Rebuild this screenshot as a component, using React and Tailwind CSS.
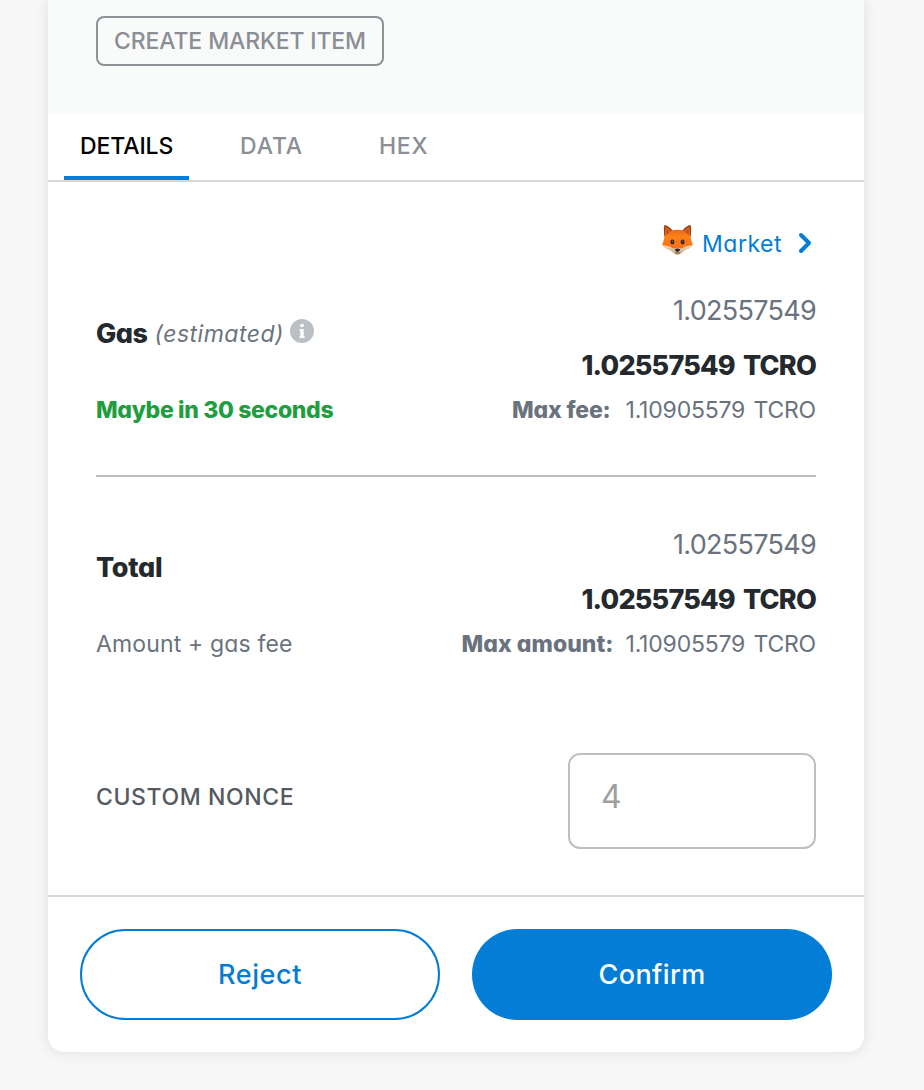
function Fox() {
  return (
    <svg width="31" height="30" viewBox="0.4 0 29.200 30" preserveAspectRatio="none" aria-hidden="true">
      <defs>
        <linearGradient id="fur" x1="0" y1="0" x2="0" y2="1">
          <stop offset="0" stopColor="#d9581a" />
          <stop offset="0.4" stopColor="#fd8317" />
          <stop offset="1" stopColor="#ee5f18" />
        </linearGradient>
        <linearGradient id="muzzle" x1="0" y1="0" x2="0" y2="1">
          <stop offset="0" stopColor="#f8dcb4" />
          <stop offset="1" stopColor="#b9a692" />
        </linearGradient>
      </defs>
      <path d="M2.800.3C5.200.4 8.400 3 10.100 5.300c3-.8 6.800-.8 9.800 0C21.600 3 24.800.4 27.200.3c.8 4 .6 8.500.2 12.200.5 2.400 1.200 4.900 2 7.200-1.200 1.500-2.600 2.900-4.300 4-2.400.5-3.400 1.400-4.900 2.800-1.500 1.400-3.200 2.900-5.200 2.900s-3.700-1.500-5.200-2.900c-1.500-1.400-2.500-2.300-4.900-2.800-1.700-1.100-3.100-2.500-4.300-4 .8-2.300 1.500-4.800 2-7.200C2.200 8.800 2 4.300 2.800.3Z" fill="url(#fur)" />
      <path d="M2.800.3C5.100.5 8.200 3 9.900 5.400L8.900 6C7.400 3.900 5.300 2.200 3.700 1.600c-.5 2.700-.5 5.900-.3 8.500l-.5 1.500C2.200 8 2 4 2.800.3ZM27.200.3C24.900.5 21.800 3 20.100 5.400l1 .6c1.500-2.100 3.600-3.800 5.200-4.400.5 2.700.5 5.900.3 8.500l.5 1.500c.7-3.600.9-7.600.1-11.300Z" fill="#87391a" />
      <path d="M4.500 3.300c1.200.8 2.600 2.200 3.400 3.600-1.400.8-2.600 2-3.300 3.300-.4-2.300-.4-4.700-.1-6.900ZM25.500 3.300c-1.200.8-2.600 2.200-3.400 3.600 1.400.8 2.600 2 3.300 3.300.4-2.300.4-4.700.1-6.900Z" fill="#c0511d" />
      <path d="M.6 20.200c3.400.1 7 .8 9.900 3l2.100.4c.7-.6 1.500-.9 2.400-.9s1.700.3 2.400.9l2.100-.4c2.900-2.200 6.500-2.900 9.900-3-1.200 1.400-2.600 2.600-4.300 3.500-2.300.5-3.500 1.500-4.900 2.800-1.500 1.400-3.200 2.900-5.200 2.900s-3.700-1.500-5.200-2.900c-1.400-1.300-2.600-2.300-4.900-2.800-1.700-.9-3.100-2.100-4.300-3.500Z" fill="url(#muzzle)" />
      <ellipse cx="10.200" cy="17" rx="1.900" ry="2.400" fill="#3b2424" />
      <ellipse cx="19.800" cy="17" rx="1.900" ry="2.400" fill="#3b2424" />
      <circle cx="10.400" cy="16.200" r=".6" fill="#9b7568" />
      <circle cx="20" cy="16.200" r=".6" fill="#9b7568" />
      <path d="M12.700 24.200c1.300-.8 3.300-.8 4.600 0 .3 1.200-1 2.300-2.300 2.500-1.300-.2-2.600-1.300-2.300-2.500Z" fill="#292326" />
      <path d="M15 26v1.600m-2.300.3c.8.400 1.700.3 2.300-.3.600.6 1.500.7 2.300.3" stroke="#4d3934" strokeWidth=".7" fill="none" />
    </svg>
  );
}

function InfoIcon() {
  return (
    <svg width="24" height="24" viewBox="0 0 24 24" aria-label="Info">
      <circle cx="12" cy="12" r="12" fill="#bbc0c5" />
      <path d="M10.300 5h3.400v3h-3.400ZM9.600 10h4.100v7h.9v2H9.600v-2h.7v-5h-.7Z" fill="#fff" />
    </svg>
  );
}

function AmountColumn({ label, labelClass }) {
  return (
    <div className="flex flex-col items-end whitespace-nowrap text-[#6a737d]">
      <div className="mt-[27px] h-10 text-[27px] leading-10 tracking-[-0.7px]">1.02557549</div>
      <div className="mt-[15px] h-10 text-[27px] leading-10 font-extrabold tracking-[-0.8px] [word-spacing:3px] text-[#24292e]">1.02557549 TCRO</div>
      <div className="mt-1 flex h-10 text-[23px] leading-10">
        <span className={labelClass}>{label}</span>
        <span className="tracking-[-0.2px] [word-spacing:2px]">1.10905579 TCRO</span>
      </div>
    </div>
  );
}

export default function App() {
  return (
    <div className="h-[1090px] overflow-hidden bg-[#f7f7f7] pr-[60px] pl-12 font-['Inter',sans-serif] [font-feature-settings:'cv11']">
      <main className="flex h-[1052px] flex-col rounded-b-2xl bg-white shadow-[0_0_14px_rgba(0,0,0,0.10)]">
        <header className="h-[113px] shrink-0 bg-[#f9fafa] px-12 pt-4">
          <div className="flex h-[50px] w-[288px] items-center justify-center rounded-lg border-2 border-[#8e9095] text-[23px] font-[450] tracking-[-0.12px] whitespace-nowrap text-[#8b8e94]">
            CREATE MARKET ITEM
          </div>
        </header>

        <nav className="flex h-[69px] shrink-0 border-b-2 border-[#d6d9dc] px-4 text-[23px] font-[450] text-[#8b8e94]">
          <button className="h-[67px] w-[125px] border-b-4 border-[#037dd6] pt-0.5 pl-4 text-left leading-[63px] tracking-[-0.1px] text-black">DETAILS</button>
          <button className="ml-[35px] h-[67px] w-[94px] pl-4 text-left leading-[65px] tracking-[0.9px]">DATA</button>
          <button className="ml-[45px] h-[67px] w-[80px] pl-4 text-left leading-[65px] tracking-[0.7px]">HEX</button>
        </nav>

        <section className="flex h-[713px] shrink-0 flex-col px-12">
          <div className="flex h-[82px] items-end justify-end pr-[4px]">
            <button className="flex h-[39px] items-center text-[23px] leading-[39px] tracking-[0.5px] text-[#037dd6]">
              <span className="mb-[9px] flex"><Fox /></span>
              <span className="ml-[9px]">Market</span>
              <svg className="mb-1 ml-4" width="14" height="22" viewBox="0 0 14 22" fill="none" stroke="#037dd6" strokeWidth="4" strokeLinecap="round" strokeLinejoin="round" aria-hidden="true">
                <path d="m3 3 8 8-8 8" />
              </svg>
            </button>
          </div>

          <div className="flex h-[211px] justify-between">
            <div className="whitespace-nowrap">
              <div className="mt-[50px] flex h-10 items-center">
                <span className="text-[27px] leading-10 font-extrabold tracking-[-0.5px] text-[#24292e]">Gas</span>
                <em className="ml-[7px] text-[23px] leading-10 tracking-[0.5px] text-[#6a737d]">(estimated)</em>
                <span className="mb-1.5 ml-1.5 flex"><InfoIcon /></span>
              </div>
              <div className="mt-9 h-10 text-[23px] leading-10 font-extrabold tracking-[-0.34px] text-[#1e9e3e]">Maybe in 30 seconds</div>
            </div>
            <AmountColumn label="Max fee:" labelClass="mr-[15px] font-extrabold tracking-[-0.15px]" />
          </div>

          <hr className="h-0.5 shrink-0 border-0 bg-[#bbc0c5]" />

          <div className="mt-[21px] flex h-[211px] justify-between">
            <div className="whitespace-nowrap">
              <div className="mt-[50px] h-10 text-[27px] leading-10 font-extrabold tracking-[-0.3px] text-[#24292e]">Total</div>
              <div className="mt-9 h-10 text-[23px] leading-10 tracking-[0.15px] text-[#6a737d]">Amount + gas fee</div>
            </div>
            <AmountColumn label="Max amount:" labelClass="mr-3 font-extrabold tracking-[0.05px]" />
          </div>

          <div className="mt-11 flex h-24 items-start justify-between">
            <label htmlFor="nonce" className="text-[23px] leading-[88px] font-[450] tracking-[0.6px] text-[#535a61]">CUSTOM NONCE</label>
            <input id="nonce" placeholder="4" className="h-24 w-[248px] rounded-xl border-2 border-[#bbc0c5] px-[31px] pb-[10px] text-[32px] placeholder:text-[#9f9f9f] placeholder:opacity-100" />
          </div>
        </section>

        <footer className="flex h-[157px] gap-8 border-t-2 border-[#d6d9dc] px-8 pt-8 text-[27px] font-[450]">
          <button className="h-[91px] w-[360px] rounded-full border-2 border-[#037dd6] pt-0.5 tracking-[0.6px] text-[#037dd6]">Reject</button>
          <button className="h-[91px] w-[360px] rounded-full bg-[#037dd6] pt-0.5 tracking-[0.4px] text-white">Confirm</button>
        </footer>
      </main>
    </div>
  );
}
